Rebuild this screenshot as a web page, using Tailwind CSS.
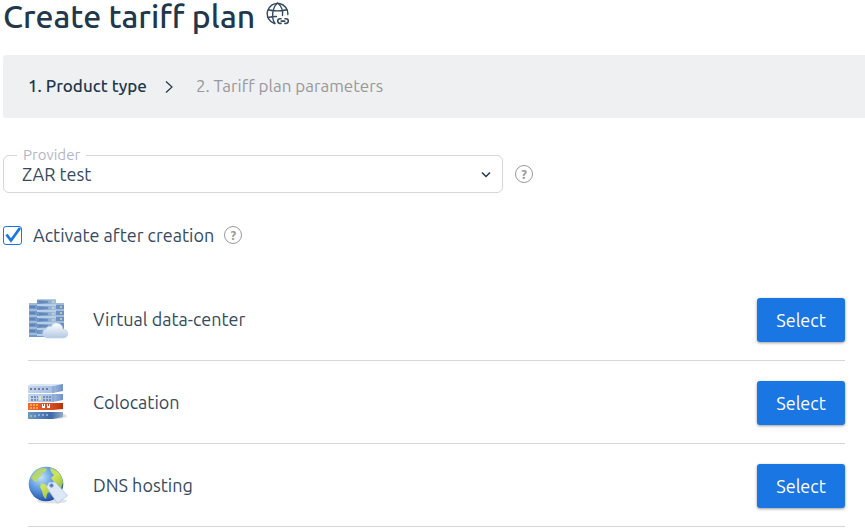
<!DOCTYPE html>
<html lang="en">
<head>
  <meta charset="UTF-8">
  <title>Create tariff plan</title>
  <meta name="viewport" content="width=device-width, initial-scale=1">
  <script src="https://cdn.jsdelivr.net/npm/@tailwindcss/browser@4"></script>
</head>

<body class="bg-white pl-[3px] font-['Ubuntu','Noto_Sans',sans-serif] text-lg text-[#344a5e]">

  <!-- Page title -->
  <header class="flex items-center gap-[11px] h-8 mb-[23px]">
    <h1 class="text-[32px] leading-8 font-medium text-[#20374c]">Create tariff plan</h1>
    <svg class="size-6 mb-1" viewBox="0 0 24 24" fill="none" stroke="#344a5e" stroke-width="1.4" stroke-linecap="round">
      <path d="M8.500 21.500A10.300 10.300 0 1 1 21.800 12.500" />
      <path d="M9 21.500C5.500 17 5.500 6.500 11.500 1C15.500 4 17 9 16.500 13.500M2 7.700C8 9.200 15 9.200 21 7.700M2 15.500C5 14.700 8 14.500 10.500 14.500" />
      <path d="M15 16.800H14a2.300 2.300 0 0 0 0 4.600h1M19 16.800H20a2.300 2.300 0 0 1 0 4.600h-1M15.200 19.100h3.600" stroke-width="1.6" />
    </svg>
  </header>

  <!-- Steps -->
  <nav class="flex items-center h-[63px] pl-[25px] bg-[#eff0f2] rounded-l-[3px] text-[17px]">
    <span class="font-medium text-[#20374c]">1. Product type</span>
    <svg class="w-2 h-3 ml-[18px] mr-[23px]" viewBox="0 0 8 12" fill="none" stroke="#20374c" stroke-width="1.2">
      <path d="M1 0.500L7 6L1 11.500" />
    </svg>
    <span class="text-[#999999]">2. Tariff plan parameters</span>
  </nav>

  <main>
    <div class="flex items-center gap-3 mt-[37px]">
      <div class="relative w-full max-w-[500px]">
        <label for="provider" class="absolute left-[14px] -top-2 px-[6px] bg-white text-[15px] leading-4 text-[#b4b6c3]">Provider</label>
        <select id="provider" class="appearance-none block w-full h-[38px] pl-[18px] pr-8 bg-transparent border border-[#d5d6d8] rounded-md leading-6">
          <option>ZAR test</option>
        </select>
        <svg class="absolute right-3 top-4 w-[10px] h-[8px] pointer-events-none" viewBox="0 0 10 8" fill="none" stroke="#20374c" stroke-width="1.500">
          <path d="M1 1.500L5 5.500L9 1.500" />
        </svg>
      </div>
      <button type="button" aria-label="About provider" class="flex items-center justify-center shrink-0 size-[18px] rounded-full border border-[#999999] text-[13px] font-bold text-[#999999]">?</button>
    </div>

    <div class="flex items-center h-6 mt-[30px]">
      <span class="relative size-[19px]">
        <input id="activate" type="checkbox" checked class="peer appearance-none block size-[19px] border border-[#1a76e3] rounded-[3px]">
        <svg class="absolute inset-0 size-[19px] hidden peer-checked:block pointer-events-none" viewBox="0 0 19 19" fill="none" stroke="#1a76e3" stroke-width="2.800">
          <path d="M3.500 8.500L8 14.500L17 2" />
        </svg>
      </span>
      <label for="activate" class="pl-[11px] pr-[10px]">Activate after creation</label>
      <button type="button" aria-label="About activation" class="flex items-center justify-center shrink-0 size-[18px] rounded-full border border-[#999999] text-[13px] font-bold text-[#999999]">?</button>
    </div>

    <!-- Product types -->
    <ul class="ml-[25px] mr-5 mt-[31px]">
      <li class="flex items-center h-[83px] border-b border-[#d5d6d8]">
        <svg class="size-10 mr-[25px]" viewBox="0 0 40 40">
          <defs>
            <linearGradient id="rack" x2="1"><stop stop-color="#6e92c3" /><stop offset="1" stop-color="#a5bfdd" /></linearGradient>
            <linearGradient id="cloud" x2="0" y2="1"><stop stop-color="#ffffff" /><stop offset="1" stop-color="#b2c9e2" /></linearGradient>
          </defs>
          <path d="M1 4h11v34H1z" fill="#7798c5" />
          <path d="M25 4h11v31H25z" fill="#6d91c2" />
          <path d="M1 5h9M1 11h9M1 17h9M1 23h9M1 29h9M1 35h9M27 5h9M27 11h9M27 17h9M27 23h9" stroke="#9fbadb" stroke-width="2" />
          <path d="M9 0h19v38H9z" fill="url(#rack)" />
          <path d="M9 0h19M9 6h19M9 12h19M9 18h19M9 24h19M9 30h19M9 36h19" stroke="#b5cee9" stroke-width="2" />
          <path d="M11 3h9M11 9h9M11 15h9M11 21h9M11 27h9M2 8h5M2 14h5M2 20h5M2 26h5M2 32h5" stroke="#4873ab" />
          <path d="M24 3h2M24 9h2M24 15h2M24 21h2M32 8h2M32 14h2M32 20h2" stroke="#cdddb0" stroke-width="1.500" />
          <path d="M20 39c-6 0-7-8-2-9c1-3 4-3 5-2c2-6 11-5 12 2c7 1 6 9 0 9z" fill="url(#cloud)" stroke="#c0d0e2" stroke-width=".6" />
        </svg>
        <span class="flex-1">Virtual data-center</span>
        <button type="button" class="w-[88px] h-11 mt-[2px] rounded-[3px] bg-[#1a76e3] text-white shadow-[0_1px_3px_rgba(0,0,0,0.4)]">Select</button>
      </li>
      <li class="flex items-center h-[83px] border-b border-[#d5d6d8]">
        <svg class="size-10 mr-[25px]" viewBox="0 0 40 40">
          <defs>
            <linearGradient id="unit" x2="1"><stop stop-color="#c6d6ed" /><stop offset=".65" stop-color="#a9c1e4" /><stop offset="1" stop-color="#6d91c8" /></linearGradient>
            <linearGradient id="alert" x2="1"><stop stop-color="#ef6a31" /><stop offset=".7" stop-color="#df4a18" /><stop offset="1" stop-color="#b3320d" /></linearGradient>
            <linearGradient id="base" x2="1"><stop stop-color="#6f96c9" /><stop offset=".65" stop-color="#3e69a9" /><stop offset="1" stop-color="#93aacb" /></linearGradient>
          </defs>
          <ellipse cx="29" cy="34" rx="10" ry="3" fill="#dfe1e4" />
          <path d="M0 4L3 2H35V9L25 11H0z" fill="url(#unit)" />
          <path d="M0 4L3 2H35L25 4z" fill="#dce7f5" />
          <path d="M0 12h35v6l-10 2H0z" fill="url(#unit)" />
          <path d="M0 21h35v6l-10 1H0z" fill="url(#alert)" />
          <path d="M0 30h35v5l-10 2H0z" fill="url(#base)" />
          <path d="M25 4v7M25 12v8M25 21v7M25 30v7" stroke="#476fae" stroke-opacity=".35" />
          <path d="M2 7h19" stroke="#6f7f99" stroke-width="2" stroke-dasharray="2 2" />
          <path d="M3 15h7M3 18h7M15 15h8M15 18h8" stroke="#7890b3" stroke-width="2" stroke-dasharray="2 1" />
          <path d="M11 14h2v4h-2z" fill="#e3e8b9" />
          <path d="M2 23h9M2 26h9" stroke="#ffa04b" stroke-width="2" stroke-dasharray="2 1" />
          <path d="M14 22h3v4h-3zM19 22h3v4h-3z" fill="#ffffff" />
          <path d="M15.500 22v2M20.500 22v2" stroke="#8d5a4b" />
          <path d="M2 34h6" stroke="#9cdc68" stroke-width="1.500" stroke-dasharray="2 2" />
          <path d="M10 33h10" stroke="#a2bce0" stroke-width="1.500" stroke-dasharray="2 2" />
        </svg>
        <span class="flex-1">Colocation</span>
        <button type="button" class="w-[88px] h-11 mt-[2px] rounded-[3px] bg-[#1a76e3] text-white shadow-[0_1px_3px_rgba(0,0,0,0.4)]">Select</button>
      </li>
      <li class="flex items-center h-[83px] border-b border-[#d5d6d8]">
        <svg class="size-10 mr-[25px]" viewBox="0 0 40 40">
          <defs>
            <radialGradient id="sea" cx=".35" cy=".3" r=".75"><stop stop-color="#c5e4fb" /><stop offset=".45" stop-color="#629fe1" /><stop offset="1" stop-color="#1d48a0" /></radialGradient>
            <linearGradient id="land" x2="1" y2="1"><stop stop-color="#a6cd7c" /><stop offset=".5" stop-color="#cfe45a" /><stop offset="1" stop-color="#75a92d" /></linearGradient>
          </defs>
          <ellipse cx="24" cy="36" rx="15" ry="2.500" fill="#e0e2e5" />
          <circle cx="18" cy="19" r="17.300" fill="url(#sea)" />
          <path d="M4 11C7 6 11 3 16 3l3 1l-2 3l-4 1l1 3l-4 2l-1 4l-3-1l-3-3zM13 18l4 1l3 3l2 4l-3 3l-1 5c-3-2-3-5-4-8l-2-4zM22 3c7 1 12 7 13 14l-2 7l-3-4l-4-3l-3-4l3-3l-3-3z" fill="url(#land)" />
          <path d="M18.500 22L21 17.500L27 17L39.500 30.500L29.500 38.500z" fill="#dce7f8" stroke="#b4c8e4" stroke-width=".8" stroke-linejoin="round" />
          <circle cx="23.500" cy="20.500" r="1.800" fill="#4c72b3" stroke="#8da9d2" />
        </svg>
        <span class="flex-1">DNS hosting</span>
        <button type="button" class="w-[88px] h-11 mt-[2px] rounded-[3px] bg-[#1a76e3] text-white shadow-[0_1px_3px_rgba(0,0,0,0.4)]">Select</button>
      </li>
    </ul>
  </main>

</body>
</html>
